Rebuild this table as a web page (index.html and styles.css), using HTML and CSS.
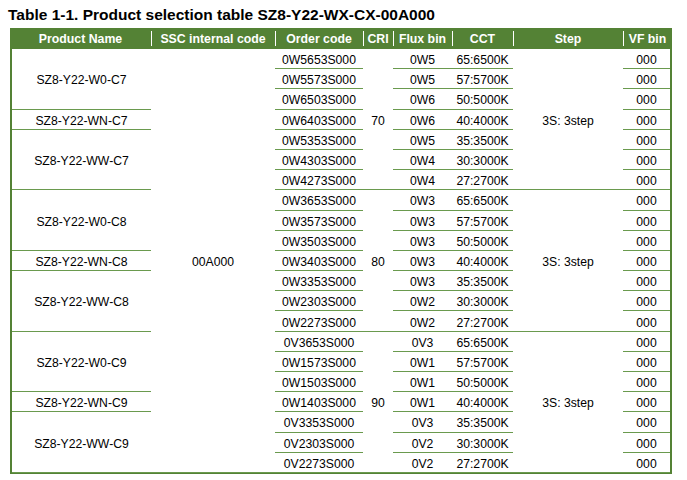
FILE: index.html
```html
<!DOCTYPE html>
<html lang="en">
<head>
<meta charset="utf-8">
<title>Product selection table</title>
<link rel="stylesheet" href="styles.css">
</head>
<body>
<div class="title">Table 1-1. Product selection table SZ8-Y22-WX-CX-00A000</div>
<div class="head">
  <div>Product Name</div>
  <div>SSC internal code</div>
  <div>Order code</div>
  <div>CRI</div>
  <div>Flux bin</div>
  <div>CCT</div>
  <div>Step</div>
  <div>VF bin</div>
</div>
<div class="body">
  <div class="p n3">SZ8-Y22-W0-C7</div>
  <div class="s n21">00A000</div>
  <div class="o">0W5653S000</div>
  <div class="r n7">70</div>
  <div class="f">0W5</div>
  <div class="c">65:6500K</div>
  <div class="t n7">3S: 3step</div>
  <div class="v">000</div>

  <div class="o">0W5573S000</div><div class="f">0W5</div><div class="c">57:5700K</div><div class="v">000</div>
  <div class="o">0W6503S000</div><div class="f">0W6</div><div class="c">50:5000K</div><div class="v">000</div>

  <div class="p">SZ8-Y22-WN-C7</div>
  <div class="o">0W6403S000</div><div class="f">0W6</div><div class="c">40:4000K</div><div class="v">000</div>

  <div class="p n3">SZ8-Y22-WW-C7</div>
  <div class="o">0W5353S000</div><div class="f">0W5</div><div class="c">35:3500K</div><div class="v">000</div>
  <div class="o">0W4303S000</div><div class="f">0W4</div><div class="c">30:3000K</div><div class="v">000</div>
  <div class="o">0W4273S000</div><div class="f">0W4</div><div class="c">27:2700K</div><div class="v">000</div>

  <div class="p n3">SZ8-Y22-W0-C8</div>
  <div class="o">0W3653S000</div>
  <div class="r n7">80</div>
  <div class="f">0W3</div>
  <div class="c">65:6500K</div>
  <div class="t n7">3S: 3step</div>
  <div class="v">000</div>
  <div class="o">0W3573S000</div><div class="f">0W3</div><div class="c">57:5700K</div><div class="v">000</div>
  <div class="o">0W3503S000</div><div class="f">0W3</div><div class="c">50:5000K</div><div class="v">000</div>

  <div class="p">SZ8-Y22-WN-C8</div>
  <div class="o">0W3403S000</div><div class="f">0W3</div><div class="c">40:4000K</div><div class="v">000</div>

  <div class="p n3">SZ8-Y22-WW-C8</div>
  <div class="o">0W3353S000</div><div class="f">0W3</div><div class="c">35:3500K</div><div class="v">000</div>
  <div class="o">0W2303S000</div><div class="f">0W2</div><div class="c">30:3000K</div><div class="v">000</div>
  <div class="o">0W2273S000</div><div class="f">0W2</div><div class="c">27:2700K</div><div class="v">000</div>

  <div class="p n3">SZ8-Y22-W0-C9</div>
  <div class="o">0V3653S000</div>
  <div class="r n7">90</div>
  <div class="f">0V3</div>
  <div class="c">65:6500K</div>
  <div class="t n7">3S: 3step</div>
  <div class="v">000</div>
  <div class="o">0W1573S000</div><div class="f">0W1</div><div class="c">57:5700K</div><div class="v">000</div>
  <div class="o">0W1503S000</div><div class="f">0W1</div><div class="c">50:5000K</div><div class="v">000</div>

  <div class="p">SZ8-Y22-WN-C9</div>
  <div class="o">0W1403S000</div><div class="f">0W1</div><div class="c">40:4000K</div><div class="v">000</div>

  <div class="p n3">SZ8-Y22-WW-C9</div>
  <div class="o">0V3353S000</div><div class="f">0V3</div><div class="c">35:3500K</div><div class="v">000</div>
  <div class="o">0V2303S000</div><div class="f">0V2</div><div class="c">30:3000K</div><div class="v">000</div>
  <div class="o">0V2273S000</div><div class="f">0V2</div><div class="c">27:2700K</div><div class="v">000</div>
</div>
</body>
</html>
```
FILE: styles.css
```css
body {
  margin: 0;
  background: #fff;
  color: #000;
  font-family: "Liberation Sans", Arial, sans-serif;
}

.title {
  margin: 0 0 4px 8px;
  padding-top: 6px;
  font-size: 15.5px;
  line-height: 18px;
  font-weight: bold;
  white-space: nowrap;
}

.head {
  margin-left: 10px;
  width: 662px;
  height: 21px;
  display: grid;
  grid-template-columns: 141px 124px 88px 30px 59px 61px 110px 49px;
  background: #548235;
  color: #fff;
  font-weight: bold;
  font-size: 12.3px;
}

.head > div {
  display: flex;
  align-items: center;
  justify-content: center;
  white-space: nowrap;
  background: linear-gradient(#fff, #fff) left center / 1px 15px no-repeat;
}

.head > div:first-child {
  background: none;
}

.body {
  margin-left: 10px;
  width: 662px;
  box-sizing: border-box;
  display: grid;
  grid-template-columns: 139px 124px 88px 30px 59px 61px 110px 47px;
  grid-auto-rows: 20.2px;
  border-left: 2px solid #548235;
  border-right: 2px solid #548235;
  border-bottom: 1px solid #548235;
  font-size: 12.2px;
}

.body > div {
  display: flex;
  align-items: center;
  justify-content: center;
  box-sizing: border-box;
  padding-top: 3px;
  border-bottom: 1px solid #6a9a4e;
  white-space: nowrap;
}

.p { grid-column: 1; }
.s { grid-column: 2; }
.o { grid-column: 3; }
.r { grid-column: 4; }
.f { grid-column: 5; }
.c { grid-column: 6; }
.t { grid-column: 7; }
.v { grid-column: 8; }

.n3 { grid-row: span 3; }
.n7 { grid-row: span 7; }
.n21 { grid-row: span 21; }
```
